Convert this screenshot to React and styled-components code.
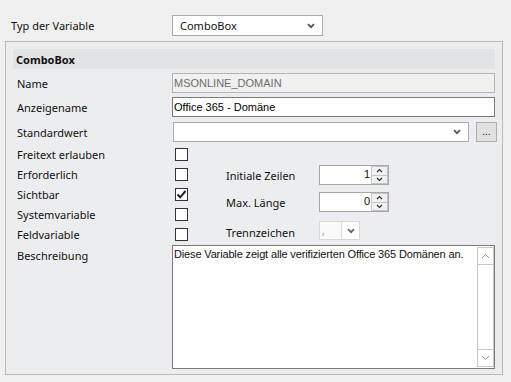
import styled, { createGlobalStyle } from "styled-components";

const GlobalStyle = createGlobalStyle`
  body {
    margin: 0;
    background: #f0f0f0;
    font-family: "Noto Sans", "Open Sans", sans-serif;
    font-size: 11px;
    color: #111;
  }
`;

function Chevron({ color = "#555" }) {
  return (
    <svg width="8" height="6" viewBox="0 0 8 6">
      <path d="M1 1.2 L4 4.2 L7 1.2" fill="none" stroke={color} strokeWidth="1.8" />
    </svg>
  );
}

function SpinArrow({ up }) {
  return (
    <svg width="7" height="5" viewBox="0 0 7 5">
      <path d={up ? "M1 4 L3.5 1.5 L6 4" : "M1 1 L3.5 3.5 L6 1"} fill="none" stroke="#333" strokeWidth="1.2" />
    </svg>
  );
}

function ThinArrow({ up }) {
  return (
    <svg width="9" height="6" viewBox="0 0 9 6">
      <path d={up ? "M1 5 L4.5 1.5 L8 5" : "M1 1 L4.5 4.5 L8 1"} fill="none" stroke="#999" strokeWidth="1" />
    </svg>
  );
}

function App() {
  return (
    <Page>
      <GlobalStyle />
      <TopRow>
        <TopLabel>Typ der Variable</TopLabel>
        <Combo width={151}>
          <ComboText>ComboBox</ComboText>
          <Chevron />
        </Combo>
      </TopRow>

      <Panel>
        <Header>ComboBox</Header>

        <FieldRow gap={4}>
          <Label>Name</Label>
          <TextInput disabled>MSONLINE_DOMAIN</TextInput>
        </FieldRow>
        <FieldRow gap={4}>
          <Label>Anzeigename</Label>
          <TextInput>Office 365 - Domäne</TextInput>
        </FieldRow>
        <FieldRow gap={5}>
          <Label>Standardwert</Label>
          <ComboLine>
            <Combo width={296} light>
              <ComboText />
              <Chevron />
            </Combo>
            <DotsButton>...</DotsButton>
          </ComboLine>
        </FieldRow>

        <Options>
          <CheckList>
            {[
              ["Freitext erlauben", false],
              ["Erforderlich", false],
              ["Sichtbar", true],
              ["Systemvariable", false],
              ["Feldvariable", false],
            ].map(([name, checked]) => (
              <CheckRow key={name}>
                <Label>{name}</Label>
                <CheckBox>
                  {checked && (
                    <svg width="11" height="11" viewBox="0 0 11 11">
                      <path d="M1.5 5.5 L4.2 8.3 L9.5 2" fill="none" stroke="#222" strokeWidth="2" />
                    </svg>
                  )}
                </CheckBox>
              </CheckRow>
            ))}
          </CheckList>

          <SideFields>
            <SideRow>
              <SideLabel>Initiale Zeilen</SideLabel>
              <Spin>
                <SpinValue>1</SpinValue>
                <SpinButtons>
                  <SpinBtn><SpinArrow up /></SpinBtn>
                  <SpinBtn><SpinArrow /></SpinBtn>
                </SpinButtons>
              </Spin>
            </SideRow>
            <SideRow gap={7}>
              <SideLabel>Max. Länge</SideLabel>
              <Spin>
                <SpinValue>0</SpinValue>
                <SpinButtons>
                  <SpinBtn><SpinArrow up /></SpinBtn>
                  <SpinBtn><SpinArrow /></SpinBtn>
                </SpinButtons>
              </Spin>
            </SideRow>
            <SideRow gap={9}>
              <SideLabel shift={3}>Trennzeichen</SideLabel>
              <SmallCombo>
                <SmallValue>,</SmallValue>
                <SmallArrow>
                  <Chevron color="#666" />
                </SmallArrow>
              </SmallCombo>
            </SideRow>
          </SideFields>
        </Options>

        <FieldRow gap={1} top>
          <Label pad={3}>Beschreibung</Label>
          <TextArea>
            <AreaText>Diese Variable zeigt alle verifizierten Office 365 Domänen an.</AreaText>
            <ScrollBar>
              <ScrollBtn><ThinArrow up /></ScrollBtn>
              <ScrollTrack />
              <ScrollBtn><ThinArrow /></ScrollBtn>
            </ScrollBar>
          </TextArea>
        </FieldRow>
      </Panel>
    </Page>
  );
}

export default App;

const Page = styled.div`
  width: 511px;
  height: 382px;
  padding-top: 15px;
  box-sizing: border-box;
  overflow: hidden;
`;

const TopRow = styled.div`
  display: flex;
  align-items: center;
  height: 21px;
  padding-left: 11px;
`;

const TopLabel = styled.div`
  width: 161px;
`;

const Combo = styled.div`
  width: ${(p) => p.width}px;
  height: ${(p) => (p.light ? 20 : 21)}px;
  box-sizing: border-box;
  border: 1px solid ${(p) => (p.light ? "#acacac" : "#a9a9a9")};
  background: #fff;
  display: flex;
  align-items: center;
  padding: 0 7px 0 7px;
  ${(p) => p.light && "margin-left: 1px;"}
`;

const ComboText = styled.span`
  flex: 1;
`;

const Panel = styled.div`
  margin: 5px 0 0 5px;
  width: 498px;
  height: 334px;
  box-sizing: border-box;
  border: 1px solid #b9b9b9;
  background: #ecedf0;
  padding: 7px 7px 0;
`;

const Header = styled.div`
  height: 20px;
  background: #e2e3e7;
  font-weight: 700;
  display: flex;
  align-items: center;
  padding-left: 3px;
`;

const FieldRow = styled.div`
  display: grid;
  grid-template-columns: 159px 1fr;
  align-items: ${(p) => (p.top ? "start" : "center")};
  margin-top: ${(p) => p.gap}px;
`;

const Label = styled.div`
  padding-left: 4px;
  padding-top: ${(p) => p.pad || 0}px;
  white-space: nowrap;
`;

const TextInput = styled.div`
  height: 20px;
  box-sizing: border-box;
  border: 1px solid ${(p) => (p.disabled ? "#b4b4b4" : "#7a7a7a")};
  background: ${(p) => (p.disabled ? "#f0f0f0" : "#fff")};
  color: ${(p) => (p.disabled ? "#6d6d6d" : "#000")};
  font-family: "Liberation Sans", Arial, sans-serif;
  font-size: 11px;
  display: flex;
  align-items: center;
  padding-left: 1px;
`;

const ComboLine = styled.div`
  display: flex;
  align-items: center;
`;

const DotsButton = styled.div`
  margin-left: 7px;
  width: 21px;
  height: 20px;
  box-sizing: border-box;
  border: 1px solid #adadad;
  background: #e1e1e1;
  display: flex;
  align-items: center;
  justify-content: center;
  font-family: "Liberation Sans", Arial, sans-serif;
  font-size: 10px;
  padding-bottom: 2px;
`;

const Options = styled.div`
  display: flex;
  margin-top: 2px;
  height: 100px;
`;

const CheckList = styled.div`
  width: 213px;
  display: flex;
  flex-direction: column;
`;

const CheckRow = styled.div`
  display: grid;
  grid-template-columns: 162px 13px;
  align-items: center;
  height: 20px;
`;

const CheckBox = styled.div`
  width: 13px;
  height: 13px;
  box-sizing: border-box;
  border: 1px solid #333;
  background: #fff;
  display: flex;
  align-items: center;
  justify-content: center;
`;

const SideFields = styled.div`
  padding-top: 21px;
  display: flex;
  flex-direction: column;
`;

const SideRow = styled.div`
  display: grid;
  grid-template-columns: 93px auto;
  align-items: center;
  margin-top: ${(p) => p.gap || 0}px;
`;

const SideLabel = styled.div`
  padding-top: ${(p) => p.shift || 0}px;
  white-space: nowrap;
`;

const Spin = styled.div`
  width: 70px;
  height: 20px;
  box-sizing: border-box;
  border: 1px solid #a5a5a5;
  background: #fff;
  display: flex;
`;

const SpinValue = styled.div`
  flex: 1;
  text-align: right;
  font-family: "Liberation Sans", Arial, sans-serif;
  font-size: 11px;
  line-height: 17px;
  padding-right: 1px;
`;

const SpinButtons = styled.div`
  width: 16px;
  display: flex;
  flex-direction: column;
  border-left: 1px solid #c8c8c8;
`;

const SpinBtn = styled.div`
  flex: 1;
  background: #f0f0f0;
  border: 1px solid #c4c4c4;
  border-left: none;
  display: flex;
  align-items: center;
  justify-content: center;
  & + & {
    border-top: none;
  }
`;

const SmallCombo = styled.div`
  width: 41px;
  height: 19px;
  box-sizing: border-box;
  border: 1px solid #d9d9d9;
  background: #fff;
  display: flex;
`;

const SmallValue = styled.div`
  width: 22px;
  border-right: 1px solid #d9d9d9;
  background: #fafafa;
  font-size: 10px;
  color: #9a7ab0;
  padding-left: 2px;
  line-height: 18px;
  box-sizing: border-box;
`;

const SmallArrow = styled.div`
  flex: 1;
  display: flex;
  align-items: center;
  justify-content: center;
`;

const TextArea = styled.div`
  height: 124px;
  box-sizing: border-box;
  border: 1px solid #7a7a7a;
  background: #fff;
  display: flex;
`;

const AreaText = styled.div`
  flex: 1;
  font-family: "Liberation Sans", Arial, sans-serif;
  font-size: 11px;
  letter-spacing: -0.15px;
  padding: 2px 0 0 1px;
  white-space: nowrap;
`;

const ScrollBar = styled.div`
  width: 17px;
  margin: 1px 0;
  box-sizing: border-box;
  border: 1px solid #c8c8c8;
  display: flex;
  flex-direction: column;
`;

const ScrollBtn = styled.div`
  height: 16px;
  display: flex;
  align-items: center;
  justify-content: center;
`;

const ScrollTrack = styled.div`
  flex: 1;
  border-top: 1px solid #c8c8c8;
  border-bottom: 1px solid #c8c8c8;
`;
